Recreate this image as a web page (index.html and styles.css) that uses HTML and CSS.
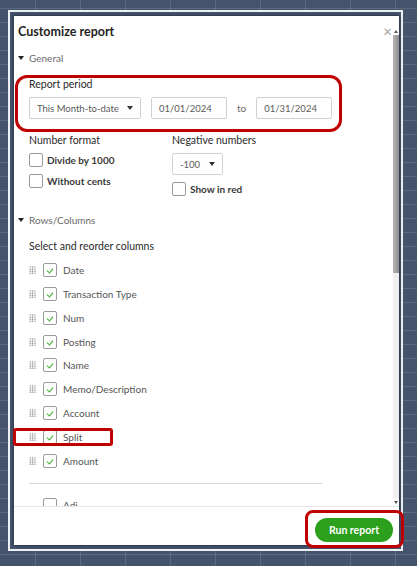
FILE: index.html
```html
<!DOCTYPE html>
<html lang="en">
<head>
  <meta charset="UTF-8">
  <meta name="viewport" content="width=device-width, initial-scale=1.0">
  <title>Customize report</title>
  <link rel="stylesheet" href="styles.css">
</head>
<body>
  <div class="sheet">
    <div class="frame">
      <div class="modal">
        <div class="modal-main">
          <div class="modal-scroll">
            <!-- Sarlavha -->
            <div class="modal-head">
              <h1>Customize report</h1>
              <span class="close">&times;</span>
            </div>

            <!-- General -->
            <div class="toggle"><span class="caret"></span>General</div>
            <div class="group">
              <div class="label">Report period</div>
              <div class="period-row">
                <div class="select select-period">This Month-to-date<span class="caret"></span></div>
                <div class="date">01/01/2024</div>
                <span class="to">to</span>
                <div class="date">01/31/2024</div>
              </div>

              <div class="options">
                <div class="col col-left">
                  <div class="label">Number format</div>
                  <label class="check check-first"><span class="box"></span>Divide by 1000</label>
                  <label class="check"><span class="box"></span>Without cents</label>
                </div>
                <div class="col">
                  <div class="label">Negative numbers</div>
                  <div class="select select-neg">-100<span class="caret"></span></div>
                  <label class="check check-red"><span class="box"></span>Show in red</label>
                </div>
              </div>
            </div>

            <!-- Rows/Columns -->
            <div class="toggle toggle-rows"><span class="caret"></span>Rows/Columns</div>
            <div class="group">
              <div class="label label-cols">Select and reorder columns</div>
              <ul class="columns">
                <li><span class="grip"></span><span class="box on"></span>Date</li>
                <li><span class="grip"></span><span class="box on"></span>Transaction Type</li>
                <li><span class="grip"></span><span class="box on"></span>Num</li>
                <li><span class="grip"></span><span class="box on"></span>Posting</li>
                <li><span class="grip"></span><span class="box on"></span>Name</li>
                <li><span class="grip"></span><span class="box on"></span>Memo/Description</li>
                <li><span class="grip"></span><span class="box on"></span>Account</li>
                <li><span class="grip"></span><span class="box on"></span>Split</li>
                <li><span class="grip"></span><span class="box on"></span>Amount</li>
              </ul>
              <hr class="divider">
              <ul class="columns columns-off">
                <li><span class="grip blank"></span><span class="box"></span>Adj</li>
              </ul>
            </div>
          </div>

          <div class="scrollbar">
            <span class="arrow up"></span>
            <span class="thumb"></span>
            <span class="track"></span>
            <span class="arrow down"></span>
          </div>
        </div>

        <div class="modal-foot">
          <button class="run-btn">Run report</button>
        </div>
      </div>
    </div>
  </div>

  <!-- Qizil belgilar -->
  <div class="mark mark-period"></div>
  <div class="mark mark-split"></div>
  <div class="mark mark-run"></div>
</body>
</html>
```

FILE: styles.css
```css
body {
  margin: 0;
  font-family: Lato, "Open Sans", sans-serif;
  background-color: #44546c;
  background-image:
    linear-gradient(to right, rgba(255, 255, 255, 0.13) 1px, transparent 1px),
    linear-gradient(to bottom, rgba(255, 255, 255, 0.13) 1px, transparent 1px);
  background-size: 45px 14px;
  background-position: 35px 8px;
  height: 566px;
  overflow: hidden;
}
.sheet {
  padding: 10px 0 0 8px;
}
.frame {
  display: inline-block;
  border: 2px solid #eef1f4;
  padding: 4px 2px 4px 4px;
  background-color: #44546c;
}
.modal {
  width: 385px;
  height: 529px;
  background-color: #fff;
  box-shadow: 0 0 3px rgba(0, 0, 0, 0.65);
  display: flex;
  flex-direction: column;
}
.modal-main {
  display: flex;
  height: 490px;
  border-bottom: 1px solid #e6e6e6;
}
.modal-scroll {
  flex: 1;
  overflow: hidden;
  padding-left: 4px;
}
.modal-head {
  display: flex;
  justify-content: space-between;
  align-items: center;
  height: 30px;
}
h1 {
  margin: 0;
  font-size: 12.5px;
  font-weight: 700;
  color: #1f1f1f;
}
.close {
  font-size: 15px;
  color: #a0a0a0;
  margin-right: 1px;
  line-height: 1;
}

/* bo'lim sarlavhalari */
.toggle {
  display: flex;
  align-items: center;
  margin-top: 5px;
  height: 14px;
  font-size: 10px;
  color: #6b6b6b;
}
.toggle .caret {
  margin-right: 5px;
}
.toggle-rows {
  margin-top: 17px;
}
.caret {
  display: inline-block;
  width: 0;
  height: 0;
  border-left: 3px solid transparent;
  border-right: 3px solid transparent;
  border-top: 4px solid #222;
}
.group {
  padding-left: 11px;
}
.label {
  margin-top: 12px;
  height: 14px;
  line-height: 14px;
  font-size: 10.5px;
  color: #2a2a2a;
}
.period-row {
  display: flex;
  align-items: center;
  gap: 10px;
  margin-top: 6px;
}
.select, .date {
  box-sizing: border-box;
  height: 22px;
  border: 1px solid #d0d0d0;
  border-radius: 2px;
  font-size: 9.5px;
  color: #5a5a5a;
  display: flex;
  align-items: center;
  padding: 0 7px;
}
.select {
  justify-content: space-between;
}
.select .caret {
  border-top-color: #333;
}
.select-period {
  width: 112px;
}
.date {
  width: 76px;
}
.to {
  font-size: 10px;
  color: #666;
}
.options {
  display: flex;
  margin-top: 14px;
}
.options .label {
  margin-top: 0;
}
.col-left {
  width: 143px;
}
.check {
  display: flex;
  align-items: center;
  margin-top: 6px;
  height: 15px;
  font-size: 10px;
  font-weight: 700;
  color: #3a3a3a;
}
.check-first {
  margin-top: 5px;
}
.check .box {
  width: 14px;
  height: 14px;
  margin-right: 4px;
}
.select-neg {
  width: 51px;
  margin-top: 6px;
}
.check-red {
  margin-top: 6px;
}
.box {
  box-sizing: border-box;
  display: inline-block;
  width: 14px;
  height: 14px;
  border: 1px solid #9a9a9a;
  border-radius: 2px;
  position: relative;
  flex-shrink: 0;
}
.box.on::after {
  content: "";
  position: absolute;
  left: 4px;
  top: 3px;
  width: 3px;
  height: 5px;
  border-right: 1.5px solid #3cab2c;
  border-bottom: 1.5px solid #3cab2c;
  transform: rotate(40deg);
}
.label-cols {
  margin-top: 12px;
}
.columns {
  list-style: none;
  margin: 5px 0 0;
  padding: 0;
}
.columns li {
  display: flex;
  align-items: center;
  height: 23.875px;
  font-size: 10px;
  color: #555;
}
.columns .box {
  margin-right: 6px;
}
.grip {
  width: 7px;
  height: 8px;
  margin-right: 7px;
  background-image: radial-gradient(circle, #a6a6a6 0.7px, transparent 0.9px);
  background-size: 2.4px 2.2px;
}
.grip.blank {
  background: none;
}
.divider {
  border: none;
  border-top: 1px solid #d6d6d6;
  width: 293px;
  margin: 10px 0 0;
}
.columns-off {
  margin-top: 9px;
}

/* o'ng tarafdagi aylantirish paneli */
.scrollbar {
  width: 6px;
  margin-top: 12px;
  display: flex;
  flex-direction: column;
  align-items: center;
}
.arrow {
  width: 0;
  height: 0;
  border-left: 2px solid transparent;
  border-right: 2px solid transparent;
  margin: 2px 0;
}
.arrow.up {
  border-bottom: 3px solid #555;
}
.arrow.down {
  border-top: 3px solid #555;
}
.thumb {
  width: 6px;
  height: 238px;
  background: linear-gradient(to right, #b5b5b5, #8e8e8e);
}
.track {
  flex: 1;
  width: 6px;
  background-color: #f0f0f0;
}
.modal-foot {
  flex: 1;
  display: flex;
  justify-content: flex-end;
  align-items: flex-start;
  padding: 11px 6px 0 0;
}
.run-btn {
  width: 78px;
  height: 24px;
  border: none;
  border-radius: 12px;
  background-color: #2ca01c;
  color: #fff;
  font-family: inherit;
  font-size: 10.5px;
  font-weight: 700;
}

/* qizil ramkalar */
.mark {
  position: absolute;
  box-sizing: border-box;
  border: 3px solid #c00000;
}
.mark-period {
  left: 15px;
  top: 75px;
  width: 327px;
  height: 57px;
  border-radius: 12px;
}
.mark-split {
  left: 13px;
  top: 428px;
  width: 100px;
  height: 18px;
  border-radius: 3px;
}
.mark-run {
  left: 305px;
  top: 510px;
  width: 99px;
  height: 38px;
  border-radius: 8px;
}
```
